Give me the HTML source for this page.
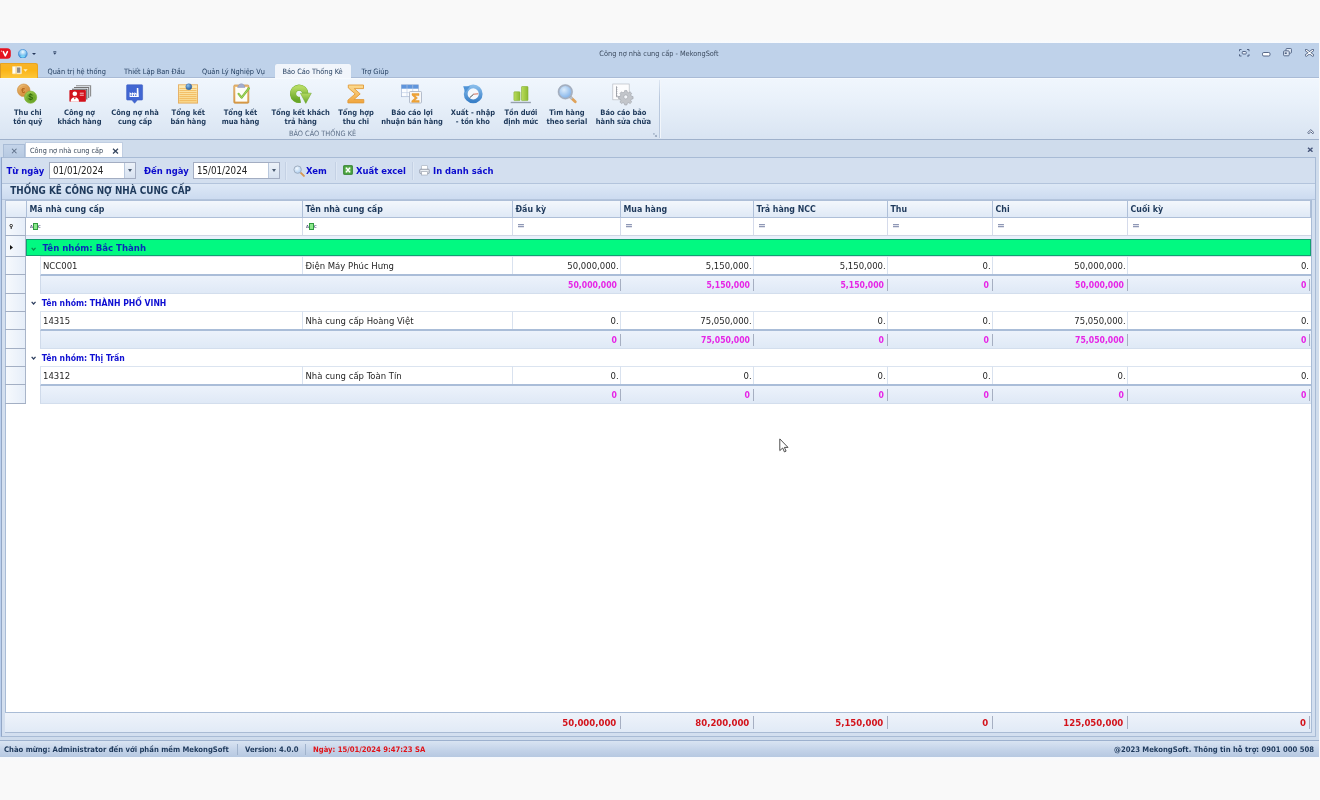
<!DOCTYPE html>
<html lang="vi">
<head>
<meta charset="utf-8">
<title>Công nợ nhà cung cấp - MekongSoft</title>
<style>
*{box-sizing:border-box;margin:0;padding:0}
html,body{width:1320px;height:800px;overflow:hidden;background:#f9f9f9}
body{font-family:"DejaVu Sans Condensed","Liberation Sans","DejaVu Sans",sans-serif;color:#1e395b;position:relative}
#app{position:absolute;left:0;top:43px;width:1319px;height:714px;background:#cfdcec;overflow:hidden;filter:blur(.4px)}
#app *{position:absolute}
#app span{white-space:pre;line-height:1}
#app svg{left:0;top:0;width:100%;height:100%}
/* title bar + tab row */
#titlebar{left:0;top:0;width:1320px;height:35px;background:#bfd2ea;border-bottom:1px solid #a9bbd6}
#title{left:0;width:1318px;top:6.800px;text-align:center;font-size:7.340px;color:#3b4a5e}
.rtab{top:24.900px;font-size:7.340px;color:#1e395b}
#tabactive{left:275.300px;top:20.800px;width:76.200px;height:15px;background:#f1f5fb;border:none;border-radius:2px 2px 0 0;box-shadow:0 0 .8px #a9bdd8}
#filebtn{left:0;top:20.400px;width:38.300px;height:14.600px;border-radius:0 2.500px 0 0;background:linear-gradient(#f9b42a,#fbb517 45%,#fcc02e 80%,#fdc838);border:1px solid #e9a520;border-left:1px solid #d99a28;border-bottom:none}
/* ribbon */
#ribbon{left:0;top:35px;width:1320px;height:62px;background:linear-gradient(#f0f6fd,#e9f1fa 35%,#d9e4f2);border-top:1px solid #f6fafe;border-bottom:1px solid #9fb1cb}
.rcap{font-size:7.500px;font-weight:bold;color:#1e395b;text-align:center;width:100px}
.ico{top:38.500px;width:26px;height:26px}
#grpcap{left:272.500px;top:87px;width:100px;text-align:center;font-size:7.340px;color:#5d6f88}
#grpsep{left:659px;top:37px;width:1px;height:58px;background:linear-gradient(#dde6f2,#b9c8dd 30%,#b9c8dd);box-shadow:1px 0 0 #f2f6fb}
/* doc tabs */
#dtab0{left:3px;top:100.500px;width:22px;height:14px;background:linear-gradient(#c4d4e9,#b6c9e1);border:1px solid #a9bcd6;border-bottom:none}
#dtab1{left:25px;top:99px;width:98px;height:16px;background:#fff;border:1px solid #c0cee2;border-bottom:none}
#dtab1 span{left:4px;top:4.400px;font-size:7.250px;color:#38475a}
.x{font-size:9px;font-weight:bold;color:#4a5a70}
/* panel */
#panel{left:1px;top:114px;width:1315px;height:580px;border:1px solid #a8bbd5;border-left-color:#93a7c6;box-shadow:-1px 0 0 #bbd0ee;background:#d3dfef}
.lbl{font-size:9.400px;font-weight:bold;color:#0a0acd;top:122.500px}
.dinput{top:119px;height:17px;width:87px;background:#fff;border:1px solid #a3adc2}
.dinput span{left:3px;top:3px;font-size:9.700px;color:#222}
.dinput i{right:0;top:0;width:11px;height:15px;background:linear-gradient(#edf2f9,#d6e1f0);border-left:1px solid #b9c8dd}
.dinput i:after{content:"";position:absolute;left:2.500px;top:6px;border:2.500px solid transparent;border-top:3px solid #4a5a70;border-bottom:none}
.tsp{top:119px;width:1px;height:18px;background:#c4d1e4;box-shadow:1px 0 0 #dde7f4}
#ptitle{left:2px;top:140px;width:1313px;height:17px;background:linear-gradient(#dde8f6,#ccdbf0);border-top:1px solid #b3c4dc;border-bottom:1px solid #b3c4dc}
#ptitle span{left:8.200px;top:2.100px;font-size:9.850px;font-weight:bold;color:#1e395b}
/* grid */
#grid{left:5px;top:157px;width:1307px;height:533px;background:#fff;border:1px solid #a9bcd6}
#ghead{left:5px;top:157px;width:1306px;height:18px;background:linear-gradient(#f3f7fc,#dfe9f6);border:1px solid #aebfd8}
.hd{top:162.300px;font-size:8.750px;font-weight:bold;color:#1e395b}
.hsep{top:158px;width:1px;height:16px;background:#aebfd8}
#gfilter{left:5px;top:175px;width:1306px;height:18px;background:#fff;border-bottom:1px solid #cfd6e4}
#ggap{left:26px;top:193px;width:1285px;height:3px;background:#e9f0fb}
.fsep{top:175px;width:1px;height:17px;background:#d5dbeb}
.feq{top:177.300px;font-size:10.500px;font-weight:bold;color:#8f98b6}
.fabc{top:180px;width:10px;height:7px}
.fabc b{font-size:4.200px;color:#5d6285;top:1.600px}
.fabc b:first-child{left:0}.fabc b:last-child{left:8px}
.fabc i{left:3px;top:0;width:5px;height:6.800px;background:#8be88b;border:1.200px solid #2f9a3f}
#indcol{left:5px;top:174px;width:21px;height:187px;background:linear-gradient(90deg,#f6f9fd,#e6eef9);border-right:1px solid #a9b5c9;border-left:1px solid #a9bcd6}
.isep{left:5px;width:21px;height:1px;background:#a3afc4}
.grow{left:26px;width:1285px;height:17px;background:#fff}
.grow.sel{background:#02f981;border:1px solid #12a070;left:26px}
.grow span{left:15.800px;top:4.600px;font-size:8.600px;font-weight:bold;color:#0f0fd2}
.grow.sel span{top:2.500px;color:#0b2bb8;left:15.500px}
#app .grow .chev{left:4.800px;top:7px;width:5.200px;height:4px}
#app .grow.sel .chev{top:6.600px;left:4.200px}
.drow{left:40px;width:1271px;height:20px;background:#fff;border-top:1px solid #dbe4f0;border-bottom:2px solid #aabdd8;border-left:1px solid #dbe4f0}
.srow{left:40px;width:1271px;height:18px;background:linear-gradient(#ecf2fb,#dfe9f6);border-bottom:1px solid #d3deed;border-left:1px solid #cfdaea}
.dt{font-size:9.460px;color:#262626}
.dv{font-size:9.460px;color:#262626}
.sv{font-size:8.600px;font-weight:bold;color:#e626e6}
.dsep{width:1px;height:18px;background:#d9e2ef}
.ssep{width:1px;height:12px;background:#a6afc2}
#gfoot{left:5px;top:669px;width:1306px;height:21px;border-bottom:1px solid #a9bbd4;background:linear-gradient(#eef3fa,#e1eaf6);border-top:1px solid #a9bcd6}
.tv{font-size:9.500px;font-weight:bold;color:#d3121a}
.tsep{top:673px;width:1px;height:13px;background:#a6afc2}

#logo{left:0;top:4.500px;width:14px;height:11px}
#globe{left:18px;top:5.500px;width:9.600px;height:9.600px}
.tri{width:0;height:0;border:2.200px solid transparent;border-top:2.600px solid #24365a;border-bottom:none}
#qac{left:53px;top:8.200px;width:3.600px;height:4px}
#fileico{left:11.500px;top:23.300px;width:17px;height:8.500px}
#collapse{left:1306.800px;top:85.800px;width:7.600px;height:5.400px}
#docclose{left:1306.500px;top:103.500px;width:6.500px;height:5.500px}
.tico{top:122px;width:12px;height:12px}
#cursor{left:778.600px;top:394.800px;width:10px;height:15px}
/* status */
#status{left:0;top:697px;width:1319px;height:17px;background:linear-gradient(#d9e4f2,#c2d2e8 60%,#b6c8e1);border-top:1px solid #9db1ce}
#status span{top:5px;font-size:7.630px;font-weight:bold;color:#1e395b}
.stsep{top:3px;width:1px;height:11px;background:#9fb2cc}
</style>
</head>
<body>
<div style="position:absolute;left:0;top:39px;width:1320px;height:4px;background:linear-gradient(#f9f9f9,#f8fbfe)"></div>
<div style="position:absolute;left:0;top:757px;width:1320px;height:4px;background:linear-gradient(#f6f9fd,#f9f9f9)"></div>
<div id="app">
 <div id="titlebar">
  <span id="title">Công nợ nhà cung cấp - MekongSoft</span>
  <div id="filebtn"></div>
  <div id="logo"><svg viewBox="0 0 14 11"><rect x="-4" y=".2" width="14.800" height="10.600" rx="3.600" fill="#e5121f"/><path d="M1 3l.8.300" stroke="#fff" stroke-width="1.200"/><path d="M3.300 3.600l2 4.300 2.100-4.300" fill="none" stroke="#fff" stroke-width="1.500" stroke-linejoin="round" stroke-linecap="round"/></svg></div>
  <div id="globe"><svg viewBox="0 0 10 10"><defs><radialGradient id="ggl" cx=".5" cy=".3" r=".75"><stop offset="0" stop-color="#f4fbff"/><stop offset=".45" stop-color="#8ecbf3"/><stop offset="1" stop-color="#1f74c8"/></radialGradient></defs><circle cx="5" cy="5" r="4.600" fill="url(#ggl)" stroke="#2f7fd0" stroke-width=".6"/><ellipse cx="5" cy="7.800" rx="2.600" ry="1.200" fill="#7fe0fb" opacity=".8"/></svg></div>
  <div class="tri" style="left:32px;top:9.500px"></div>
  <div id="qac"><svg viewBox="0 0 4 4.500"><rect x=".3" y="0" width="3.400" height=".8" fill="#34486a"/><path d="M0 1.800h4l-2 2.400z" fill="#34486a"/></svg></div>
  <div id="fileico"><svg viewBox="0 0 18 9"><rect x=".4" y=".4" width="9.700" height="7.900" rx=".6" fill="#fffdf4" stroke="#f7e7b4" stroke-width=".6"/><rect x="5.300" y="1.500" width="3.600" height="5.700" fill="#8d8a88"/><rect x="3.900" y=".4" width=".8" height="7.900" fill="#e2b552"/><path d="M12 3.400h4.600l-2.300 2.800z" fill="#ffeebc"/></svg></div>
  <div class="wc" style="left:1239px;top:6px;width:10.500px;height:7.500px"><svg viewBox="0 0 21 15"><g fill="none" stroke="#46587a" stroke-width="1.800"><path d="M1 4.500V1h4M16 1h4v3.500M20 10.500V14h-4M5 14H1v-3.500"/><rect x="6.500" y="5" width="8" height="5" rx="1.500" fill="#eef3fa"/></g></svg></div>
  <div class="wc" style="left:1262px;top:9px;width:8.500px;height:4.500px"><svg viewBox="0 0 17 9"><rect x="1" y="1" width="15" height="7" rx="2.500" fill="#fdfeff" stroke="#46587a" stroke-width="1.800"/></svg></div>
  <div class="wc" style="left:1283px;top:5.300px;width:9px;height:8.400px"><svg viewBox="0 0 18 17"><g fill="#dfe8f5" stroke="#46587a" stroke-width="1.700"><rect x="6" y="1" width="11" height="9.500" rx="1.800"/><rect x="1" y="5.800" width="11.500" height="10" rx="1.800"/></g><rect x="3.500" y="9" width="4" height="3" fill="#46587a"/></svg></div>
  <div class="wc" style="left:1304.500px;top:6px;width:9px;height:7.600px"><svg viewBox="0 0 18 15"><path d="M2.500 2.500l13 10M15.500 2.500l-13 10" stroke="#46587a" stroke-width="5.200" stroke-linecap="round"/><path d="M2.500 2.500l13 10M15.500 2.500l-13 10" stroke="#fdfeff" stroke-width="2.200" stroke-linecap="round"/></svg></div>

  <div id="tabactive"></div>
  <span class="rtab" style="left:47.500px">Quản trị hệ thống</span>
  <span class="rtab" style="left:124px">Thiết Lập Ban Đầu</span>
  <span class="rtab" style="left:202px">Quản Lý Nghiệp Vụ</span>
  <span class="rtab" style="left:282.500px">Báo Cáo Thống Kê</span>
  <span class="rtab" style="left:361.500px">Trợ Giúp</span>
 </div>
 <div id="ribbon"></div>
 <div id="ribbonitems">
  <div class="ico" style="left:14.8px"><svg viewBox="0 0 26 26"><defs><radialGradient id="gb" cx=".4" cy=".35" r=".7"><stop offset="0" stop-color="#f6cf8c"/><stop offset="1" stop-color="#c9802c"/></radialGradient><radialGradient id="gg" cx=".4" cy=".35" r=".7"><stop offset="0" stop-color="#b9de62"/><stop offset="1" stop-color="#5f9d20"/></radialGradient></defs><circle cx="8.7" cy="8.300" r="6.300" fill="url(#gb)" stroke="#d59a4e" stroke-width=".7"/><circle cx="8.7" cy="8.300" r="4.200" fill="#d98d38" opacity=".55"/><text x="8.200" y="11" font-size="7" font-weight="bold" text-anchor="middle" fill="#b0641a" font-family="Liberation Sans,sans-serif">€</text><circle cx="15.600" cy="15.200" r="6.100" fill="url(#gg)" stroke="#86b840" stroke-width=".7"/><circle cx="15.600" cy="15.200" r="4.300" fill="#5f9d20" opacity=".6"/><text x="15.600" y="18.300" font-size="8.500" font-weight="bold" text-anchor="middle" fill="#2f6a0b" font-family="Liberation Sans,sans-serif">$</text></svg></div>
  <span class="rcap" style="left:-22.2px;top:65.900px">Thu chi</span>
  <span class="rcap" style="left:-22.2px;top:74.900px">tồn quỹ</span>
  <div class="ico" style="left:66.5px"><svg viewBox="0 0 26 26"><path d="M9 3.800H23.600V14.500" fill="none" stroke="#8a8a8a" stroke-width="1.100"/><path d="M7 5.500H21.700V16" fill="none" stroke="#747474" stroke-width="1.100"/><path d="M5 7.200H19.800V17.500" fill="none" stroke="#5e5e5e" stroke-width="1.100"/><rect x="2.400" y="7.900" width="16.500" height="11.800" rx=".8" fill="#d2111b"/><circle cx="7.800" cy="11.800" r="2.300" fill="#fff"/><path d="M3.600 19.700c0-2.800 1.700-4.400 4.200-4.400s4.200 1.600 4.200 4.400z" fill="#fff"/><path d="M6.600 15.400l1.200 2.200 1.200-2.200z" fill="#d2111b"/><rect x="12.800" y="10.700" width="4" height="1" fill="#f8c1c4"/><rect x="12.800" y="12.700" width="4" height="1" fill="#f8c1c4"/></svg></div>
  <span class="rcap" style="left:29.5px;top:65.900px">Công nợ</span>
  <span class="rcap" style="left:29.5px;top:74.900px">khách hàng</span>
  <div class="ico" style="left:122.0px"><svg viewBox="0 0 26 26"><path d="M5.400 2.700h14.400a.8.8 0 0 1 .8.800V17.300a.8.8 0 0 1-.8.800h-4.400l-2.800 3.200-2.800-3.200H5.400a.8.800 0 0 1-.8-.8V3.500a.8.800 0 0 1 .8-.8z" fill="#4166d2" stroke="#3557bd" stroke-width=".5"/><path d="M7.600 14.900V10.200l2.400 1.500V10.200l2.400 1.500V10.200l2.400 1.500V5.900h1.500l.5 9z" fill="#fff"/><rect x="8.600" y="12.400" width="1.200" height="1.600" fill="#4166d2"/><rect x="10.900" y="12.400" width="1.200" height="1.600" fill="#4166d2"/><rect x="13.200" y="12.400" width="1.200" height="1.600" fill="#4166d2"/></svg></div>
  <span class="rcap" style="left:85.0px;top:65.900px">Công nợ nhà</span>
  <span class="rcap" style="left:85.0px;top:74.900px">cung cấp</span>
  <div class="ico" style="left:175.3px"><svg viewBox="0 0 26 26"><defs><linearGradient id="gn" x1="0" y1="0" x2="0" y2="1"><stop offset="0" stop-color="#fdebb6"/><stop offset="1" stop-color="#f8d486"/></linearGradient><radialGradient id="gp" cx=".35" cy=".3" r=".8"><stop offset="0" stop-color="#8fc4f0"/><stop offset="1" stop-color="#174f96"/></radialGradient></defs><rect x="3.400" y="2.800" width="19.200" height="18.300" fill="url(#gn)" stroke="#e2a654" stroke-width=".8"/><g stroke="#efb150" stroke-width=".7"><path d="M4.500 6.500h17M4.500 8.500h17M4.500 10.500h17M4.500 12.500h17M4.500 14.500h17M4.500 16.500h17M4.500 18.500h17"/></g><path d="M11.500 7.500l1.800-1.500" stroke="#b9903c" stroke-width="1" opacity=".6"/><circle cx="13.800" cy="4.700" r="3" fill="url(#gp)" stroke="#2a5c9c" stroke-width=".4"/></svg></div>
  <span class="rcap" style="left:138.3px;top:65.900px">Tổng kết</span>
  <span class="rcap" style="left:138.3px;top:74.900px">bán hàng</span>
  <div class="ico" style="left:227.5px"><svg viewBox="0 0 26 26"><defs><linearGradient id="gc" x1="0" y1="0" x2="0" y2="1"><stop offset="0" stop-color="#efc27e"/><stop offset="1" stop-color="#d99a46"/></linearGradient></defs><rect x="5.800" y="3" width="15" height="18.200" rx="1" fill="url(#gc)" stroke="#c98e3e" stroke-width=".7"/><rect x="7.300" y="5" width="12" height="14.600" fill="#fdfdf8"/><path d="M9.600 5.400c.6-2.400 2-3.600 3.700-3.600s3.100 1.200 3.700 3.600z" fill="#a3aed0" stroke="#8490b8" stroke-width=".5"/><path d="M10.600 11.900l3 3.700 7.300-9.300" fill="none" stroke="#79b838" stroke-width="2.200" stroke-linecap="round" stroke-linejoin="round"/><path d="M10.600 11.900l3 3.700 7.300-9.300" fill="none" stroke="#b4e070" stroke-width=".8" stroke-linecap="round" stroke-linejoin="round"/></svg></div>
  <span class="rcap" style="left:190.5px;top:65.900px">Tổng kết</span>
  <span class="rcap" style="left:190.5px;top:74.900px">mua hàng</span>
  <div class="ico" style="left:287.7px"><svg viewBox="0 0 26 26"><defs><linearGradient id="gr" x1="0" y1="0" x2="0" y2="1"><stop offset="0" stop-color="#b4da62"/><stop offset="1" stop-color="#68a628"/></linearGradient></defs><path d="M12.270 17.860A6.150 6.150 0 1 1 17.350 11.800" fill="none" stroke="#74ad32" stroke-width="6.2"/><path d="M12.270 17.860A6.150 6.150 0 1 1 17.350 11.800" fill="none" stroke="url(#gr)" stroke-width="5.4"/><path d="M12.400 11.200h10.900l-5.500 10.200z" fill="url(#gr)" stroke="#69a32a" stroke-width=".5" stroke-linejoin="round"/></svg></div>
  <span class="rcap" style="left:250.7px;top:65.900px">Tổng kết khách</span>
  <span class="rcap" style="left:250.7px;top:74.900px">trả hàng</span>
  <div class="ico" style="left:343.0px"><svg viewBox="0 0 26 26"><defs><linearGradient id="gs" x1="0" y1="0" x2="0" y2="1"><stop offset="0" stop-color="#fcdc92"/><stop offset="1" stop-color="#f0a43c"/></linearGradient></defs><path d="M5.300 3h15.200v3.600H11.300l5.900 5.300-6.300 5.700h9.900v3.300H4.900v-2.700l7.300-6.300-6.900-6z" fill="url(#gs)" stroke="#e09a3a" stroke-width=".9" stroke-linejoin="round"/></svg></div>
  <span class="rcap" style="left:306.0px;top:65.900px">Tổng hợp</span>
  <span class="rcap" style="left:306.0px;top:74.900px">thu chi</span>
  <div class="ico" style="left:399.0px"><svg viewBox="0 0 26 26"><rect x="2.400" y="2.800" width="17" height="11.900" fill="#fbfdff" stroke="#a7b7d2" stroke-width=".7"/><rect x="2.400" y="2.800" width="17" height="3.900" fill="#5f95dc"/><path d="M2.400 10.600h17M8 2.800v11.900M13.700 2.800v11.900" stroke="#b9c9e2" stroke-width=".6"/><rect x="10.500" y="9.500" width="12" height="11.500" rx=".8" fill="#f7f7f7" stroke="#a4aec0" stroke-width=".8"/><path d="M13 11.600h7v2h-4.100l2.600 2.400-2.800 2.500h4.500v1.800h-7.400v-1.500l3.300-2.800-3.100-2.800z" fill="#f1a436" stroke="#d88a22" stroke-width=".4" stroke-linejoin="round"/></svg></div>
  <span class="rcap" style="left:362.0px;top:65.900px">Báo cáo lợi</span>
  <span class="rcap" style="left:362.0px;top:74.900px">nhuận bán hàng</span>
  <div class="ico" style="left:459.9px"><svg viewBox="0 0 26 26"><defs><linearGradient id="gk" x1="0" y1="0" x2="0" y2="1"><stop offset="0" stop-color="#86bbea"/><stop offset="1" stop-color="#3a80c8"/></linearGradient></defs><circle cx="13.200" cy="11.900" r="7.500" fill="#f4f8fd" stroke="url(#gk)" stroke-width="3.800"/><path d="M3.200 4.300l6.900 0L5.300 10.600z" fill="#4f93d6"/><path d="M13.600 12.200l4.600-.4" stroke="#d0604a" stroke-width=".9"/><path d="M13.600 12.200l-4 3.600" stroke="#3a3a3a" stroke-width=".9"/></svg></div>
  <span class="rcap" style="left:422.9px;top:65.900px">Xuất - nhập</span>
  <span class="rcap" style="left:422.9px;top:74.900px">- tồn kho</span>
  <div class="ico" style="left:507.9px"><svg viewBox="0 0 26 26"><defs><linearGradient id="gv" x1="0" y1="0" x2="1" y2="0"><stop offset="0" stop-color="#b9dc5c"/><stop offset="1" stop-color="#8dbb32"/></linearGradient></defs><rect x="5.900" y="9.800" width="6.100" height="8.800" rx=".6" fill="url(#gv)" stroke="#84ae36" stroke-width=".6"/><rect x="13.500" y="4.500" width="6.500" height="14.100" rx=".6" fill="url(#gv)" stroke="#84ae36" stroke-width=".6"/><rect x="2.700" y="19.800" width="20.200" height="1.400" fill="#96a0ad"/></svg></div>
  <span class="rcap" style="left:470.9px;top:65.900px">Tồn dưới</span>
  <span class="rcap" style="left:470.9px;top:74.900px">định mức</span>
  <div class="ico" style="left:553.9px"><svg viewBox="0 0 26 26"><defs><radialGradient id="gm" cx=".4" cy=".35" r=".8"><stop offset="0" stop-color="#dcecfb"/><stop offset="1" stop-color="#6da6e6"/></radialGradient></defs><path d="M16.300 15l5 4.800" stroke="#dfa25a" stroke-width="2.800" stroke-linecap="round"/><path d="M15.800 14.500l2.400 2.300" stroke="#b5bfcc" stroke-width="2.600"/><circle cx="11.300" cy="9.800" r="6.600" fill="url(#gm)" stroke="#a7b2c3" stroke-width="1.500"/><circle cx="11.300" cy="9.800" r="7.300" fill="none" stroke="#8b97aa" stroke-width=".4"/></svg></div>
  <span class="rcap" style="left:516.9px;top:65.900px">Tìm hàng</span>
  <span class="rcap" style="left:516.9px;top:74.900px">theo serial</span>
  <div class="ico" style="left:610.4px"><svg viewBox="0 0 26 26"><rect x="2.800" y="2" width="16.400" height="15.800" fill="#fcfcfd" stroke="#b9bdc4" stroke-width=".7"/><path d="M6.500 4.300v10.500h5" fill="none" stroke="#8d9198" stroke-width=".8"/><path d="M6.500 5.500h1M6.500 7.500h1M6.500 9.500h1M6.500 11.500h1M6.500 13.500h1" stroke="#8d9198" stroke-width=".5"/><g transform="translate(15.800 14.900) scale(.92)"><path d="M-1.200-7h2.400l.4 1.800 1.500.7 1.600-1 1.700 1.700-1 1.600.7 1.500 1.800.4v2.400l-1.800.4-.7 1.500 1 1.600-1.700 1.700-1.600-1-1.500.7-.4 1.800h-2.400l-.4-1.800-1.500-.7-1.600 1-1.700-1.700 1-1.600-.7-1.500-1.800-.4v-2.400l1.800-.4.700-1.500-1-1.600 1.700-1.700 1.600 1 1.500-.7z" fill="#c2c5ca" stroke="#9a9ea6" stroke-width=".6"/><circle r="2.200" fill="#f4f6fa" stroke="#9a9ea6" stroke-width=".6"/></g></svg></div>
  <span class="rcap" style="left:573.4px;top:65.900px">Báo cáo bảo</span>
  <span class="rcap" style="left:573.4px;top:74.900px">hành sửa chữa</span>
  <span id="grpcap">BÁO CÁO THỐNG KÊ</span>
  <div id="grpsep"></div>
  <div id="collapse"><svg viewBox="0 0 14 10"><path d="M1.200 6.800L7 1.200l5.800 5.600-2 2L7 5.200 3.200 8.800z" fill="#fbfdff" stroke="#46567a" stroke-width="1.700" stroke-linejoin="round"/></svg></div>
  <div id="grplaunch" style="left:652.500px;top:89.500px;width:4px;height:4px"><svg viewBox="0 0 8 8"><path d="M.5 4V.5H4" fill="none" stroke="#7f90aa" stroke-width="1"/><path d="M3 3l4 4M7 3.800V7H3.800" fill="none" stroke="#7f90aa" stroke-width="1.200"/></svg></div>
  <div id="docclose"><svg viewBox="0 0 13 11"><path d="M2 1.500l9 8M11 1.500l-9 8" stroke="#46557a" stroke-width="2.900"/></svg></div>
 </div>
 <div id="dtab0"><svg style="left:7px;top:3.600px;width:6.500px;height:6px" viewBox="0 0 13 12"><path d="M2 1.500l9 9M11 1.500l-9 9" stroke="#5b6c86" stroke-width="2.100"/></svg></div>
 <div id="dtab1"><span>Công nợ nhà cung cấp</span><svg style="left:86px;top:4.800px;width:7px;height:6.200px" viewBox="0 0 14 12.400"><path d="M2 1.500l10 9.400M12 1.500l-10 9.400" stroke="#36465f" stroke-width="2.500"/></svg></div>
 <div id="panel"></div>
 <span class="lbl" style="left:6.500px">Từ ngày</span>
 <div class="dinput" style="left:49px"><span>01/01/2024</span><i></i></div>
 <span class="lbl" style="left:144px">Đến ngày</span>
 <div class="dinput" style="left:193px"><span>15/01/2024</span><i></i></div>
 <div class="tsp" style="left:285px"></div>
 <span class="lbl" style="left:306px">Xem</span>
 <div class="tsp" style="left:335px"></div>
 <span class="lbl" style="left:356px">Xuất excel</span>
 <div class="tsp" style="left:412px"></div>
 <span class="lbl" style="left:433px">In danh sách</span>

 <div class="tico" style="left:292.500px"><svg viewBox="0 0 22 22"><defs><radialGradient id="tm" cx=".4" cy=".35" r=".8"><stop offset="0" stop-color="#f3f9ff"/><stop offset="1" stop-color="#9cc4ec"/></radialGradient></defs><path d="M13 13l7 7" stroke="#d69750" stroke-width="3.400" stroke-linecap="round"/><circle cx="8.500" cy="8.500" r="6.800" fill="url(#tm)" stroke="#9fadbf" stroke-width="1.800"/></svg></div>
 <div class="tico" style="left:342.500px;top:122px;width:10px;height:10px"><svg viewBox="0 0 20 20"><rect x="1" y="1" width="18" height="18" rx="1.500" fill="#3f9a35" stroke="#2c7a26" stroke-width="1.400"/><rect x="3.500" y="3.500" width="13" height="13" fill="#7cc46c" opacity=".7"/><path d="M6 5.500l8 9M14 5.500l-8 9" stroke="#fff" stroke-width="2.600"/></svg></div>
 <div class="tico" style="left:419px;top:122px;width:11px;height:11px"><svg viewBox="0 0 22 22"><rect x="5.500" y="1.500" width="11" height="8" fill="#fff" stroke="#9aa3b0" stroke-width="1"/><rect x="1.500" y="8.500" width="19" height="8.500" rx="1.500" fill="#d3d8e0" stroke="#7c8594" stroke-width="1.200"/><rect x="5" y="13.500" width="12" height="6.500" fill="#fff" stroke="#8b94a2" stroke-width="1"/><rect x="3" y="10.500" width="16" height="1.600" fill="#f4f6f9"/></svg></div>
 <div id="ptitle"><span>THỐNG KÊ CÔNG NỢ NHÀ CUNG CẤP</span></div>
 <div id="grid"></div>
 <div id="ggap"></div>
  <div id="ghead"></div>
  <div class="hsep" style="left:26px"></div>
  <span class="hd" style="left:29.5px">Mã nhà cung cấp</span>
  <span class="hd" style="left:305.5px">Tên nhà cung cấp</span>
  <div class="hsep" style="left:302px"></div>
  <span class="hd" style="left:515.5px">Đầu kỳ</span>
  <div class="hsep" style="left:512px"></div>
  <span class="hd" style="left:623.5px">Mua hàng</span>
  <div class="hsep" style="left:620px"></div>
  <span class="hd" style="left:756.5px">Trả hàng NCC</span>
  <div class="hsep" style="left:753px"></div>
  <span class="hd" style="left:890.5px">Thu</span>
  <div class="hsep" style="left:887px"></div>
  <span class="hd" style="left:995.5px">Chi</span>
  <div class="hsep" style="left:992px"></div>
  <span class="hd" style="left:1130.5px">Cuối kỳ</span>
  <div class="hsep" style="left:1127px"></div>
  <div id="gfilter"></div>
  <span class="fabc" style="left:30px"><b>A</b><i></i><b>C</b></span>
  <div class="fsep" style="left:302px"></div>
  <span class="fabc" style="left:306px"><b>A</b><i></i><b>C</b></span>
  <div class="fsep" style="left:512px"></div>
  <span class="feq" style="left:517px">=</span>
  <div class="fsep" style="left:620px"></div>
  <span class="feq" style="left:625px">=</span>
  <div class="fsep" style="left:753px"></div>
  <span class="feq" style="left:758px">=</span>
  <div class="fsep" style="left:887px"></div>
  <span class="feq" style="left:892px">=</span>
  <div class="fsep" style="left:992px"></div>
  <span class="feq" style="left:997px">=</span>
  <div class="fsep" style="left:1127px"></div>
  <span class="feq" style="left:1132px">=</span>
  <div class="grow sel" style="top:196px"><svg class="chev" viewBox="0 0 8 6"><path d="M1 1.200l3 3.300 3-3.300" fill="none" stroke="#0c8a4c" stroke-width="1.900"/></svg><span style="font-size:9.540px">Tên nhóm: Bắc Thành</span></div>
  <div class="drow" style="top:213px"></div>
  <span class="dt" style="left:43px;top:217.5px">NCC001</span>
  <span class="dt" style="left:305.500px;top:217.5px">Điện Máy Phúc Hưng</span>
  <div class="srow" style="top:233px"></div>
  <div class="dsep" style="left:302px;top:213px"></div>
  <div class="dsep" style="left:512px;top:213px"></div>
  <div class="dsep" style="left:620px;top:213px"></div>
  <div class="dsep" style="left:753px;top:213px"></div>
  <div class="dsep" style="left:887px;top:213px"></div>
  <div class="dsep" style="left:992px;top:213px"></div>
  <div class="dsep" style="left:1127px;top:213px"></div>
  <span class="dv" style="right:700.3px;top:217.5px">50,000,000.</span>
  <span class="dv" style="right:567.3px;top:217.5px">5,150,000.</span>
  <span class="dv" style="right:433.3px;top:217.5px">5,150,000.</span>
  <span class="dv" style="right:328.3px;top:217.5px">0.</span>
  <span class="dv" style="right:193.3px;top:217.5px">50,000,000.</span>
  <span class="dv" style="right:10.0px;top:217.5px">0.</span>
  <span class="sv" style="right:702.0px;top:237.5px">50,000,000</span>
  <div class="ssep" style="left:619.7px;top:236px"></div>
  <span class="sv" style="right:569.0px;top:237.5px">5,150,000</span>
  <div class="ssep" style="left:752.7px;top:236px"></div>
  <span class="sv" style="right:435.0px;top:237.5px">5,150,000</span>
  <div class="ssep" style="left:886.7px;top:236px"></div>
  <span class="sv" style="right:330.0px;top:237.5px">0</span>
  <div class="ssep" style="left:991.7px;top:236px"></div>
  <span class="sv" style="right:195.0px;top:237.5px">50,000,000</span>
  <div class="ssep" style="left:1126.7px;top:236px"></div>
  <span class="sv" style="right:12.7px;top:237.5px">0</span>
  <div class="ssep" style="left:1309.0px;top:236px"></div>
  <div class="grow" style="top:251px"><svg class="chev" viewBox="0 0 8 6"><path d="M1 1.200l3 3.300 3-3.300" fill="none" stroke="#2c3d5e" stroke-width="1.900"/></svg><span style="font-size:8.600px">Tên nhóm: THÀNH PHỐ VINH</span></div>
  <div class="drow" style="top:268px"></div>
  <span class="dt" style="left:43px;top:272.5px">14315</span>
  <span class="dt" style="left:305.500px;top:272.5px">Nhà cung cấp Hoàng Việt</span>
  <div class="srow" style="top:288px"></div>
  <div class="dsep" style="left:302px;top:268px"></div>
  <div class="dsep" style="left:512px;top:268px"></div>
  <div class="dsep" style="left:620px;top:268px"></div>
  <div class="dsep" style="left:753px;top:268px"></div>
  <div class="dsep" style="left:887px;top:268px"></div>
  <div class="dsep" style="left:992px;top:268px"></div>
  <div class="dsep" style="left:1127px;top:268px"></div>
  <span class="dv" style="right:700.3px;top:272.5px">0.</span>
  <span class="dv" style="right:567.3px;top:272.5px">75,050,000.</span>
  <span class="dv" style="right:433.3px;top:272.5px">0.</span>
  <span class="dv" style="right:328.3px;top:272.5px">0.</span>
  <span class="dv" style="right:193.3px;top:272.5px">75,050,000.</span>
  <span class="dv" style="right:10.0px;top:272.5px">0.</span>
  <span class="sv" style="right:702.0px;top:292.5px">0</span>
  <div class="ssep" style="left:619.7px;top:291px"></div>
  <span class="sv" style="right:569.0px;top:292.5px">75,050,000</span>
  <div class="ssep" style="left:752.7px;top:291px"></div>
  <span class="sv" style="right:435.0px;top:292.5px">0</span>
  <div class="ssep" style="left:886.7px;top:291px"></div>
  <span class="sv" style="right:330.0px;top:292.5px">0</span>
  <div class="ssep" style="left:991.7px;top:291px"></div>
  <span class="sv" style="right:195.0px;top:292.5px">75,050,000</span>
  <div class="ssep" style="left:1126.7px;top:291px"></div>
  <span class="sv" style="right:12.7px;top:292.5px">0</span>
  <div class="ssep" style="left:1309.0px;top:291px"></div>
  <div class="grow" style="top:306px"><svg class="chev" viewBox="0 0 8 6"><path d="M1 1.200l3 3.300 3-3.300" fill="none" stroke="#2c3d5e" stroke-width="1.900"/></svg><span style="font-size:8.600px">Tên nhóm: Thị Trấn</span></div>
  <div class="drow" style="top:323px"></div>
  <span class="dt" style="left:43px;top:327.5px">14312</span>
  <span class="dt" style="left:305.500px;top:327.5px">Nhà cung cấp Toàn Tín</span>
  <div class="srow" style="top:343px"></div>
  <div class="dsep" style="left:302px;top:323px"></div>
  <div class="dsep" style="left:512px;top:323px"></div>
  <div class="dsep" style="left:620px;top:323px"></div>
  <div class="dsep" style="left:753px;top:323px"></div>
  <div class="dsep" style="left:887px;top:323px"></div>
  <div class="dsep" style="left:992px;top:323px"></div>
  <div class="dsep" style="left:1127px;top:323px"></div>
  <span class="dv" style="right:700.3px;top:327.5px">0.</span>
  <span class="dv" style="right:567.3px;top:327.5px">0.</span>
  <span class="dv" style="right:433.3px;top:327.5px">0.</span>
  <span class="dv" style="right:328.3px;top:327.5px">0.</span>
  <span class="dv" style="right:193.3px;top:327.5px">0.</span>
  <span class="dv" style="right:10.0px;top:327.5px">0.</span>
  <span class="sv" style="right:702.0px;top:347.5px">0</span>
  <div class="ssep" style="left:619.7px;top:346px"></div>
  <span class="sv" style="right:569.0px;top:347.5px">0</span>
  <div class="ssep" style="left:752.7px;top:346px"></div>
  <span class="sv" style="right:435.0px;top:347.5px">0</span>
  <div class="ssep" style="left:886.7px;top:346px"></div>
  <span class="sv" style="right:330.0px;top:347.5px">0</span>
  <div class="ssep" style="left:991.7px;top:346px"></div>
  <span class="sv" style="right:195.0px;top:347.5px">0</span>
  <div class="ssep" style="left:1126.7px;top:346px"></div>
  <span class="sv" style="right:12.7px;top:347.5px">0</span>
  <div class="ssep" style="left:1309.0px;top:346px"></div>
  <div id="indcol"></div>
  <svg style="left:8.600px;top:181px;width:4.400px;height:5.200px" viewBox="0 0 9 10.500"><circle cx="4.500" cy="3.200" r="2.600" fill="#fff" stroke="#1a1a1a" stroke-width="1.800"/><path d="M4.500 5.500v5" stroke="#1a1a1a" stroke-width="2"/></svg>
  <svg style="left:9.500px;top:202.400px;width:3px;height:4.800px" viewBox="0 0 6 9.600"><path d="M0 0l6 4.800-6 4.800z" fill="#111"/></svg>
  <div class="isep" style="top:174px"></div>
  <div class="isep" style="top:192px"></div>
  <div class="isep" style="top:213px"></div>
  <div class="isep" style="top:231px"></div>
  <div class="isep" style="top:250px"></div>
  <div class="isep" style="top:268px"></div>
  <div class="isep" style="top:286px"></div>
  <div class="isep" style="top:305px"></div>
  <div class="isep" style="top:323px"></div>
  <div class="isep" style="top:341px"></div>
  <div class="isep" style="top:360px"></div>
  <div id="gfoot"></div>
  <span class="tv" style="right:702.7px;top:675px">50,000,000</span>
  <div class="tsep" style="left:619.7px"></div>
  <span class="tv" style="right:569.7px;top:675px">80,200,000</span>
  <div class="tsep" style="left:752.7px"></div>
  <span class="tv" style="right:435.7px;top:675px">5,150,000</span>
  <div class="tsep" style="left:886.7px"></div>
  <span class="tv" style="right:330.7px;top:675px">0</span>
  <div class="tsep" style="left:991.7px"></div>
  <span class="tv" style="right:195.7px;top:675px">125,050,000</span>
  <div class="tsep" style="left:1126.7px"></div>
  <span class="tv" style="right:13.0px;top:675px">0</span>
  <div class="tsep" style="left:1309.0px"></div>
 <div id="status">
  <span style="left:4px">Chào mừng: Administrator đến với phần mềm MekongSoft</span>
  <div class="stsep" style="left:237px"></div>
  <span style="left:245px">Version: 4.0.0</span>
  <div class="stsep" style="left:305px"></div>
  <span style="left:313px;color:#e01218">Ngày: 15/01/2024 9:47:23 SA</span>
  <span style="right:5px">@2023 MekongSoft. Thông tin hỗ trợ: 0901 000 508</span>
 </div>
 <div id="cursor"><svg viewBox="0 0 10 15"><path d="M.8 .9V12.600l2.900-2.600 1.700 3.900 1.700-.8-1.700-3.700h3.600z" fill="#fff" stroke="#3c3c3c" stroke-width=".9" stroke-linejoin="round"/></svg></div>
</div>
</body>
</html>
